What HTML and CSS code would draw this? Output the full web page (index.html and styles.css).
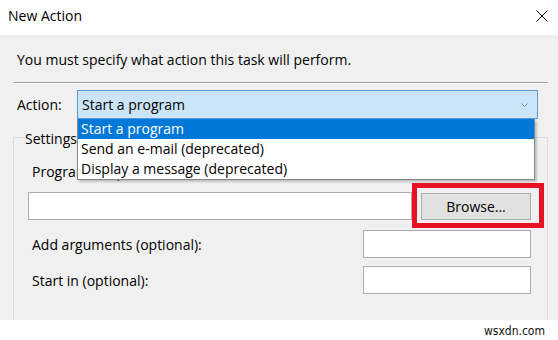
FILE: index.html
```html
<!DOCTYPE html>
<html lang="en">
<head>
    <meta charset="UTF-8">
    <meta name="viewport" content="width=device-width, initial-scale=1.0">
    <title>New Action</title>
    <link rel="stylesheet" href="styles.css">
</head>
<body>
    <div class="titlebar">
        <span class="title">New Action</span>
        <svg class="close" width="12" height="12" viewBox="0 0 12 12">
            <path d="M0.5 0.5 L11.5 11.5 M11.5 0.5 L0.5 11.5" stroke="#000" stroke-width="1" fill="none"/>
        </svg>
    </div>

    <div class="content">
        <p class="intro">You must specify what action this task will perform.</p>
        <div class="rule"></div>

        <div class="action-row">
            <label class="action-label">Action:</label>
            <div class="combo">
                <span class="combo-text">Start a program</span>
                <svg class="chevron" width="7" height="4" viewBox="0 0 7 4">
                    <path d="M0.5 0.5 L3.5 3.5 L6.5 0.5" stroke="#7a8a99" stroke-width="1" fill="none"/>
                </svg>
                <ul class="dropdown">
                    <li class="selected">Start a program</li>
                    <li>Send an e-mail (deprecated)</li>
                    <li>Display a message (deprecated)</li>
                </ul>
            </div>
        </div>

        <fieldset class="settings">
            <legend>Settings</legend>
            <div class="field-label">Program/script:</div>
            <div class="program-row">
                <input type="text" class="textbox program-box">
                <div class="highlight">
                    <button type="button" class="browse">Browse...</button>
                </div>
            </div>
            <div class="option-row">
                <label>Add arguments (optional):</label>
                <input type="text" class="textbox option-box">
            </div>
            <div class="option-row second">
                <label>Start in (optional):</label>
                <input type="text" class="textbox option-box">
            </div>
        </fieldset>
    </div>

    <div class="footer">wsxdn.com</div>
</body>
</html>
```

FILE: styles.css
```css
body {
    margin: 0;
    width: 558px;
    height: 340px;
    overflow: hidden;
    background-color: #fff;
    font-family: "Open Sans", "Noto Sans", sans-serif;
    font-size: 14px;
    color: #000;
}

.titlebar {
    height: 35px;
    box-sizing: border-box;
    display: flex;
    justify-content: space-between;
    align-items: flex-start;
    padding: 7px 10px 0 8px;
    background-color: #fff;
}

.title {
    line-height: 18px;
}

.close {
    margin-top: 3px;
}

.content {
    height: 285px;
    overflow: hidden;
    box-sizing: border-box;
    padding: 0 10px 0 13px;
    background-color: #f0f0f0;
}

.intro {
    margin: 15px 0 0;
    padding-left: 4px;
    line-height: 20px;
}

.rule {
    margin-top: 12px;
    border-top: 1px solid #a0a0a0;
    border-bottom: 1px solid #fff;
}

.action-row {
    display: flex;
    align-items: center;
    margin-top: 6px;
}

.action-label {
    width: 64px;
    padding-left: 4px;
    box-sizing: border-box;
}

.combo {
    position: relative;
    width: 461px;
    height: 29px;
    box-sizing: border-box;
    display: flex;
    align-items: center;
    justify-content: space-between;
    padding: 0 9px 0 4px;
    background-color: #cce4f7;
    border: 1px solid #5a9ad8;
}

.chevron {
    margin-top: 1px;
}

.dropdown {
    position: absolute;
    top: 28px;
    left: -1px;
    z-index: 2;
    width: 458px;
    margin: 0;
    padding: 0;
    list-style: none;
    box-sizing: border-box;
    background-color: #fff;
    border: 1px solid #828790;
    border-top: none;
    box-shadow: 2px 2px 2px rgba(0, 0, 0, 0.2);
}

.dropdown li {
    height: 20px;
    line-height: 20px;
    padding-left: 3px;
}

.dropdown .selected {
    background-color: #0078d7;
    color: #fff;
}

.settings {
    margin: 6px 0 0;
    padding: 0 0 0 10px;
    min-height: 240px;
    border: 1px solid #dcdcdc;
}

.settings legend {
    padding: 4px 1px 0;
    line-height: 20px;
}

.field-label {
    margin-top: 13px;
    padding-left: 8px;
    line-height: 20px;
}

.program-row {
    display: flex;
    align-items: flex-start;
    margin-top: 1px;
}

.textbox {
    height: 28px;
    box-sizing: border-box;
    margin: 0;
    border: 1px solid #adadad;
    background-color: #fff;
    font: inherit;
}

.program-box {
    width: 384px;
    margin: 9px 0 0 4px;
}

.highlight {
    border: 5px solid #e81123;
    padding: 5px 8px 3px 4px;
}

.browse {
    display: block;
    width: 110px;
    height: 27px;
    box-sizing: border-box;
    margin: 0;
    padding: 0;
    background-color: #e1e1e1;
    border: 1px solid #adadad;
    font: inherit;
    color: #000;
}

.option-row {
    display: flex;
    justify-content: space-between;
    align-items: center;
    margin: 2px 16px 0 0;
}

.option-row.second {
    margin-top: 8px;
}

.option-row label {
    padding-left: 8px;
}

.option-box {
    width: 168px;
}

.footer {
    height: 20px;
    padding-right: 13px;
    text-align: right;
    font-family: "DejaVu Sans Condensed", "DejaVu Sans", sans-serif;
    font-size: 12px;
    line-height: 22px;
    color: #111;
}
```
